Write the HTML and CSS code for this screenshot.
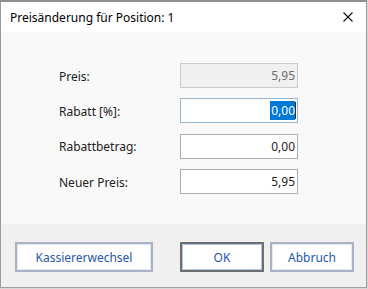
FILE: index.html
```html
<!DOCTYPE html>
<html lang="de">
<head>
<meta charset="UTF-8" />
<title>Preisänderung</title>
<link rel="stylesheet" href="styles.css">
</head>
<body>
<div class="window">
  <div class="titlebar">
    <span class="title">Preisänderung für Position: 1</span>
    <svg class="close" width="10" height="10" viewBox="0 0 10 10">
      <path d="M0.5 0.5 L9.5 9.5 M9.5 0.5 L0.5 9.5" stroke="#111" stroke-width="1.1" fill="none" />
    </svg>
  </div>

  <div class="content">
    <div class="form">
      <label>Preis:</label>
      <div class="field disabled"><span class="field-text">5,95</span></div>

      <label>Rabatt [%]:</label>
      <div class="field focused">
        <span class="field-text"><span class="selected">0,00</span></span>
        <span class="caret"></span>
      </div>

      <label>Rabattbetrag:</label>
      <div class="field"><span class="field-text">0,00</span></div>

      <label>Neuer Preis:</label>
      <div class="field"><span class="field-text">5,95</span></div>
    </div>
  </div>

  <div class="footer">
    <button class="btn wide">Kassiererwechsel</button>
    <div class="button-group">
      <button class="btn default">OK</button>
      <button class="btn">Abbruch</button>
    </div>
  </div>
</div>
</body>
</html>
```

FILE: styles.css
```css
html, body {
  margin: 0;
  padding: 0;
}
body {
  background: #d8d8d8;
  font-family: "Noto Sans", "Open Sans", sans-serif;
  font-size: 12px;
  color: #1e1e1e;
  width: 368px;
  height: 289px;
  overflow: hidden;
}
.window {
  width: 365px;
  height: 285px;
  border-top: 2px solid #8e8e8e;
  border-left: 1px solid #9a9a9a;
  border-right: 1px solid #9a9a9a;
  border-bottom: 1px solid #a0a0a0;
  display: flex;
  flex-direction: column;
}
.titlebar {
  height: 30px;
  background: #fff;
  display: flex;
  align-items: center;
  padding: 0 9px 0 9px;
}
.title {
  flex: 1;
  color: #000;
  padding-top: 1px;
}
.close {
  margin-right: 4px;
}
.content {
  background: #f9f9f9;
  height: 192px;
  padding: 31px 0 0 58px;
  box-sizing: border-box;
}
.form {
  display: grid;
  grid-template-columns: 121px 118px;
  grid-auto-rows: 25px;
  row-gap: 10.4px;
  align-items: center;
}
.form label {
  color: #222;
  padding-top: 1px;
}
.field {
  height: 25px;
  box-sizing: border-box;
  border: 1px solid #adadad;
  background: #fff;
  display: flex;
  align-items: center;
  padding-right: 2px;
}
.field-text {
  flex: 1;
  text-align: right;
  overflow: hidden;
  white-space: nowrap;
  line-height: 19px;
}
.field.disabled {
  background: #f0f0f0;
  border-color: #cccccc;
  color: #6d6d6d;
}
.field.focused {
  border-color: #99b4d1;
  padding-right: 1px;
}
.field.focused .field-text {
  display: flex;
  justify-content: flex-end;
}
.selected {
  background: #0078d7;
  color: #fff;
  padding-left: 1px;
}
.caret {
  width: 1px;
  height: 17px;
  background: #3a2a20;
}
.footer {
  flex: 1;
  background: #f0f0f0;
  display: flex;
  align-items: flex-start;
  justify-content: space-between;
  padding: 18px 12px 0 14px;
}
.button-group {
  display: flex;
  gap: 6px;
}
.btn {
  height: 30px;
  width: 84px;
  box-sizing: border-box;
  background: #fff;
  border: 2px solid #a9b2c3;
  box-shadow: inset 0 0 0 1px #dfe8f5;
  font-family: "Noto Sans", "Open Sans", sans-serif;
  font-size: 12px;
  color: #2458b0;
  padding: 0;
  margin: 0;
}
.btn.wide {
  width: 138px;
}
.btn.default {
  border-color: #6e6e6e;
  box-shadow: inset 0 0 0 1px #aac6ea;
}
```
